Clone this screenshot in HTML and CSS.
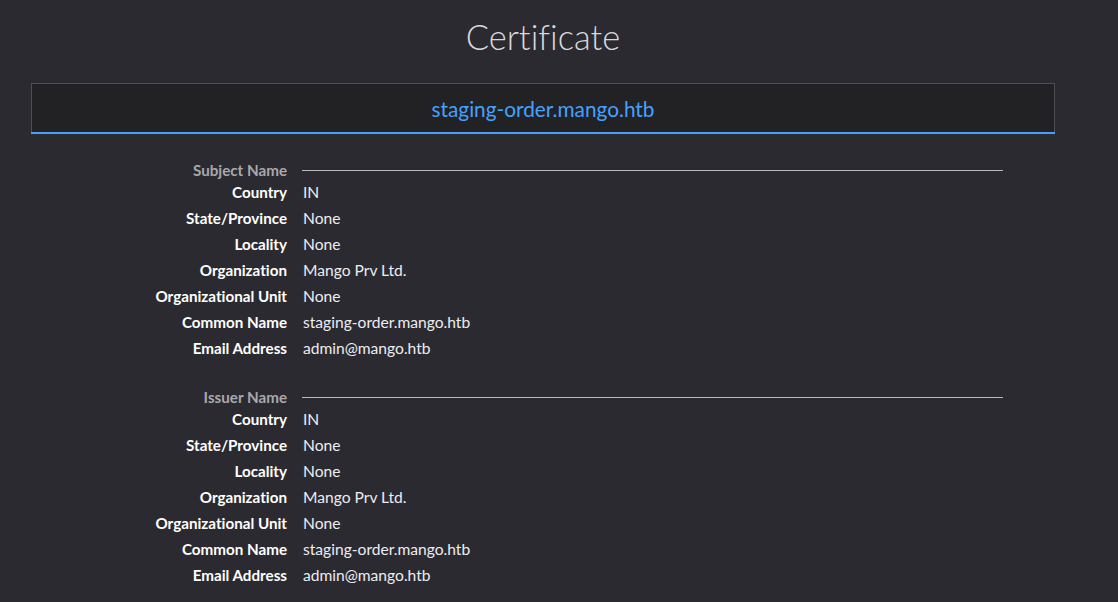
FILE: index.html
```html
<!DOCTYPE html>
<html>
<head>
<meta charset="utf-8">
<link rel="stylesheet" href="styles.css">
<title>Certificate</title>
</head>
<body>
<div class="page">
  <h1 class="title">Certificate</h1>
  <div class="tabs">
    <div class="tab">staging-order.mango.htb</div>
  </div>
  <div class="info">
    <div class="group">
      <div class="group-head"><span class="head-label">Subject Name</span><span class="rule"></span></div>
      <div class="row"><span class="k">Country</span><span class="v">IN</span></div>
      <div class="row"><span class="k">State/Province</span><span class="v">None</span></div>
      <div class="row"><span class="k">Locality</span><span class="v">None</span></div>
      <div class="row"><span class="k">Organization</span><span class="v">Mango Prv Ltd.</span></div>
      <div class="row"><span class="k">Organizational Unit</span><span class="v">None</span></div>
      <div class="row"><span class="k">Common Name</span><span class="v">staging-order.mango.htb</span></div>
      <div class="row"><span class="k">Email Address</span><span class="v">admin@mango.htb</span></div>
    </div>
    <div class="group">
      <div class="group-head"><span class="head-label">Issuer Name</span><span class="rule"></span></div>
      <div class="row"><span class="k">Country</span><span class="v">IN</span></div>
      <div class="row"><span class="k">State/Province</span><span class="v">None</span></div>
      <div class="row"><span class="k">Locality</span><span class="v">None</span></div>
      <div class="row"><span class="k">Organization</span><span class="v">Mango Prv Ltd.</span></div>
      <div class="row"><span class="k">Organizational Unit</span><span class="v">None</span></div>
      <div class="row"><span class="k">Common Name</span><span class="v">staging-order.mango.htb</span></div>
      <div class="row"><span class="k">Email Address</span><span class="v">admin@mango.htb</span></div>
    </div>
  </div>
</div>
</body>
</html>
```

FILE: styles.css
```css
* { box-sizing: border-box; }
html, body {
  margin: 0;
  padding: 0;
  background: #2b2a30;
  color: #f9f9fa;
  font-family: Lato, "Noto Sans", sans-serif;
  font-variant-ligatures: none;
  overflow: hidden;
}
.page {
  margin-left: 31px;
  width: 1024px;
}
.title {
  margin: 0;
  padding-top: 15px;
  height: 83px;
  text-align: center;
  font-size: 34.5px;
  font-weight: 300;
  color: #d8d8dc;
  line-height: 44px;
}
.tabs {
  height: 51px;
  background: #222224;
  border: 1px solid #4f4f53;
  border-bottom: none;
}
.tab {
  height: 50px;
  border-bottom: 2px solid #45a1ff;
  margin: 0 -1px;
  display: flex;
  align-items: center;
  justify-content: center;
  color: #45a1ff;
  font-size: 20.8px;
  padding-top: 1px;
}
.info {
  padding: 25px 52px 0 16px;
}
.group {
  margin-bottom: 25px;
}
.group-head {
  display: grid;
  grid-template-columns: 240px 1fr;
  column-gap: 15px;
  align-items: center;
  height: 22px;
  margin-bottom: -2px;
}
.head-label {
  text-align: right;
  font-weight: 700;
  color: #a8a8ac;
  font-size: 15.2px;
}
.rule {
  height: 1px;
  background: #b8b8bb;
}
.row {
  display: grid;
  grid-template-columns: 240px 1fr;
  column-gap: 16px;
  height: 26px;
  align-items: center;
}
.k {
  text-align: right;
  font-weight: 700;
  color: #ffffff;
  font-size: 15.2px;
}
.v {
  color: #ededf0;
  font-size: 15.6px;
}
```
